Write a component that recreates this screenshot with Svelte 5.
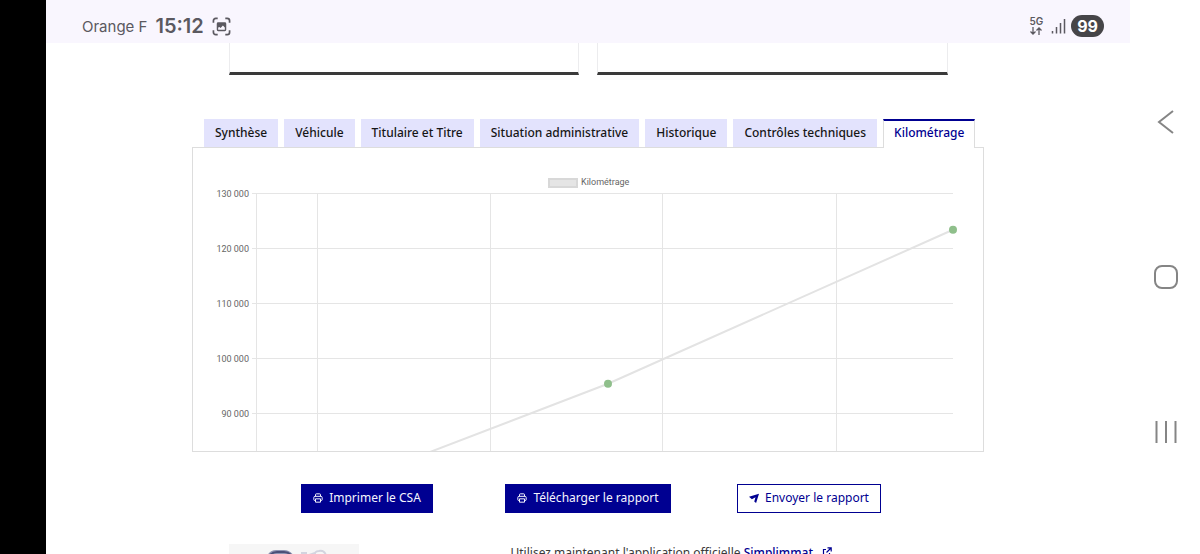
<script lang="ts">
    const tabs = [
        "Synthèse",
        "Véhicule",
        "Titulaire et Titre",
        "Situation administrative",
        "Historique",
        "Contrôles techniques",
        "Kilométrage",
    ];
    let selected = $state(6);

    // chart geometry, in viewBox units
    const left = 64;
    const right = 760;
    const top = 46;
    const step = 55;
    const bottom = 304;
    const columns = [64, 125, 298, 470, 644];
    const ticks = [130000, 120000, 110000, 100000, 90000];
    const points = [
        { x: 415, km: 95500 },
        { x: 760, km: 123500 },
    ];

    function yOf(km: number) {
        return top + ((130000 - km) / 10000) * step;
    }

    function format(km: number) {
        return km / 1000 + " 000";
    }

    const line = "237,304 " + points.map((p) => `${p.x},${yOf(p.km)}`).join(" ");
</script>

{#snippet printer()}
    <svg class="icon" viewBox="0 0 12 12" aria-hidden="true">
        <path
            d="M3 4V2q0-1 1-1h4q1 0 1 1v2M3 9H2Q1 9 1 8V5.500Q1 4 2.500 4h7Q11 4 11 5.500V8q0 1-1 1H9M3 7h6v4H3z"
            fill="none"
            stroke="currentColor"
            stroke-width="1.200"
        />
    </svg>
{/snippet}

<div class="screen">
    <div class="cutout"></div>

    <div class="view">
        <header class="status">
            <span class="carrier">Orange F</span>
            <span class="clock">15:12</span>
            <svg class="capture" viewBox="0 0 20 20" aria-hidden="true">
                <path
                    d="M1.500 6V4q0-2.500 2.500-2.500h2M14 1.500h2q2.500 0 2.500 2.500v2M18.500 14v2q0 2.500-2.500 2.500h-2M6 18.500H4q-2.500 0-2.500-2.500v-2"
                    fill="none"
                    stroke="currentColor"
                    stroke-width="1.800"
                />
                <path
                    fill-rule="evenodd"
                    d="M6.500 5.500h7q1.500 0 1.500 1.500v6.500q0 1.500-1.500 1.500h-7Q5 15 5 13.500V7q0-1.500 1.500-1.500zM6.500 11v2.500h7V11l-2-2-2.500 2.500-1.200-1z"
                    fill="currentColor"
                />
            </svg>
            <div class="network">
                <span>5G</span>
                <svg viewBox="0 0 12 8" aria-hidden="true">
                    <path
                        d="M3 0v7M.5 4.500L3 7l2.500-2.500M9 8V1M6.500 3.500L9 1l2.500 2.500"
                        fill="none"
                        stroke="currentColor"
                        stroke-width="1.300"
                    />
                </svg>
            </div>
            <svg class="signal" viewBox="0 0 15 16" aria-hidden="true">
                <path
                    d="M1.500 15.500v-2.500M5.500 15.500V9M9.500 15.500V5M13.500 15.500V1"
                    stroke="currentColor"
                    stroke-width="1.500"
                />
            </svg>
            <span class="battery">99</span>
        </header>

        <main>
            <div class="cards">
                <div class="card"></div>
                <div class="card"></div>
            </div>

            <section class="report">
                <div class="tabs" role="tablist">
                    {#each tabs as tab, i}
                        <button
                            role="tab"
                            class:active={selected === i}
                            aria-selected={selected === i}
                            onclick={() => (selected = i)}>{tab}</button
                        >
                    {/each}
                </div>
                <div class="panel" role="tabpanel">
                    <svg class="chart" viewBox="0 0 790 303">
                        <rect class="swatch" x="356" y="31" width="28" height="8" />
                        <text x="388" y="37">Kilométrage</text>
                        {#each ticks as km}
                            <path class="grid" d="M{left - 5} {yOf(km) - 0.5}H{right}" />
                            <text class="tick" x="56" y={yOf(km) + 3}>{format(km)}</text>
                        {/each}
                        {#each columns as x}
                            <path class="grid" d="M{x - 0.5} {top}V{bottom}" />
                        {/each}
                        <polyline points={line} />
                        {#each points as p}
                            <circle cx={p.x} cy={yOf(p.km)} r="4" />
                        {/each}
                    </svg>
                </div>
            </section>

            <div class="actions">
                <button class="primary">{@render printer()}Imprimer le CSA</button>
                <button class="primary">{@render printer()}Télécharger le rapport</button>
                <button class="secondary">
                    <svg class="icon" viewBox="0 0 12 12" aria-hidden="true">
                        <path d="M0 4.500L12 1 8.500 12 6.300 10.200 7.800 5.200 3.500 7.500z" fill="currentColor" />
                    </svg>
                    Envoyer le rapport
                </button>
            </div>

            <div class="promo">
                <div class="thumb">
                    <svg viewBox="0 0 130 60" aria-hidden="true">
                        <path d="M38 12q3-6 9-6h8q6 0 10 6l4 8H35z" fill="#8f94b2" />
                        <path d="M41 11q3-3 7-3h7q4 0 7 3" fill="none" stroke="#4b5078" stroke-width="2" />
                        <path
                            d="M72 9h5v5h-6M86 12q-1-5 4-5 6-1 7 5M80 11l6-2"
                            fill="none"
                            stroke="#d3d4df"
                            stroke-width="2"
                        />
                    </svg>
                </div>
                <p>
                    Utilisez maintenant l'application officielle
                    <a href="#simplimmat"
                        >Simplimmat
                        <svg class="external" viewBox="0 0 10 10" aria-hidden="true">
                            <path
                                d="M4 2.500H1.500v6h6V6M5.500.8h3.700v3.700M9 1L4.500 5.500"
                                fill="none"
                                stroke="currentColor"
                                stroke-width="1.200"
                            />
                        </svg></a
                    >
                </p>
            </div>
        </main>
    </div>

    <nav class="keys" aria-label="Navigation">
        <button aria-label="Retour">
            <svg viewBox="0 0 24 24"><path d="M19 1L5 12l14 11" /></svg>
        </button>
        <button aria-label="Accueil">
            <svg viewBox="0 0 24 24"><rect x="1" y="1" width="22" height="22" rx="7" /></svg>
        </button>
        <button aria-label="Applications récentes">
            <svg viewBox="0 0 24 24"><path d="M2.500 1v22M12 1v22M21.500 1v22" /></svg>
        </button>
    </nav>
</div>

<style>
    :global(body) {
        margin: 0;
        background: #fff;
    }

    .screen {
        display: grid;
        grid-template-columns: 46px 1fr 70px;
        height: 100vh;
        overflow: hidden;
        font-family: "Noto Sans", "Open Sans", sans-serif;
        font-size: 12px;
        color: #3a3a3a;
    }

    button {
        font: inherit;
        margin: 0;
        border: 0;
        cursor: pointer;
    }

    .cutout {
        background: #000;
    }

    .view {
        min-width: 0;
    }

    .status {
        display: flex;
        align-items: center;
        box-sizing: border-box;
        height: 43px;
        padding: 9px 26px 0 36px;
        background: #f9f6fe;
        color: #5b5960;
        font-family: Inter, Roboto, sans-serif;
    }

    .carrier {
        font-size: 15px;
        font-weight: 400;
    }

    .clock {
        margin-left: 8px;
        font-size: 20px;
        font-weight: 600;
    }

    .capture {
        width: 19px;
        margin-left: 8px;
    }

    .network {
        display: flex;
        flex-direction: column;
        align-items: center;
        gap: 1px;
        margin-left: auto;
        font-size: 10px;
        font-weight: 600;
        line-height: 9px;
    }

    .network svg {
        width: 12px;
    }

    .signal {
        width: 15px;
        margin: 0 5px 0 8px;
    }

    .battery {
        padding: 0 6px;
        border-radius: 11px;
        background: #464548;
        color: #fff;
        font-size: 16px;
        font-weight: 700;
        line-height: 22px;
    }

    .cards {
        display: grid;
        grid-template-columns: 1fr 1fr;
        gap: 18px;
        max-width: 719px;
        margin: 0 auto;
    }

    .card {
        height: 29px;
        border: 1px solid #ececee;
        border-top: 0;
        border-bottom: 3px solid #3a3a3a;
    }

    .report {
        max-width: 792px;
        margin: 44px auto 0;
    }

    .tabs {
        display: flex;
        gap: 6px;
        padding: 0 12px;
    }

    .tabs button {
        padding: 0 11px 2px;
        border-top: 2px solid #e3e3fd;
        background: #e3e3fd;
        color: #161616;
        font-weight: 500;
        line-height: 24px;
        white-space: nowrap;
    }

    .tabs .active {
        position: relative;
        margin-bottom: -1px;
        padding: 0 10px 3px;
        border: 1px solid #ddd;
        border-top: 2px solid #000091;
        border-bottom: 0;
        background: #fff;
        color: #000091;
    }

    .panel {
        border: 1px solid #ddd;
    }

    .chart {
        display: block;
        width: 100%;
        font-family: Roboto, sans-serif;
        font-size: 9px;
        fill: #666;
    }

    .swatch {
        fill: #e5e5e5;
        stroke: #d8d8d8;
        stroke-width: 2;
    }

    .tick {
        text-anchor: end;
    }

    .grid {
        stroke: #e5e5e5;
    }

    polyline {
        fill: none;
        stroke: #e3e3e3;
        stroke-width: 2;
    }

    circle {
        fill: #8fbf8b;
    }

    .actions {
        display: grid;
        grid-template-columns: repeat(3, 1fr);
        justify-items: center;
        max-width: 663px;
        margin: 32px auto 0;
    }

    .actions button {
        display: flex;
        align-items: center;
        gap: 6px;
        padding: 0 11px 2px;
        border: 1px solid #000091;
        line-height: 25px;
        white-space: nowrap;
    }

    .primary {
        background: #000091;
        color: #f5f5fe;
    }

    .secondary {
        background: #fff;
        color: #000091;
    }

    .icon {
        width: 10px;
    }

    .promo {
        display: grid;
        grid-template-columns: 130px 1fr;
        gap: 152px;
        max-width: 719px;
        margin: 31px auto 0;
    }

    .thumb {
        background: #f6f6f6;
    }

    .thumb svg {
        display: block;
    }

    p {
        margin: 0;
        line-height: 18px;
    }

    a {
        color: #000091;
        font-weight: 500;
        text-decoration: none;
    }

    .external {
        width: 10px;
        margin-left: 6px;
    }

    .keys {
        display: flex;
        flex-direction: column;
        align-items: center;
        gap: 131px;
        padding: 110px 0 0 2px;
    }

    .keys button {
        padding: 0;
        background: none;
    }

    .keys svg {
        display: block;
        width: 24px;
        fill: none;
        stroke: #858585;
        stroke-width: 2;
    }
</style>
